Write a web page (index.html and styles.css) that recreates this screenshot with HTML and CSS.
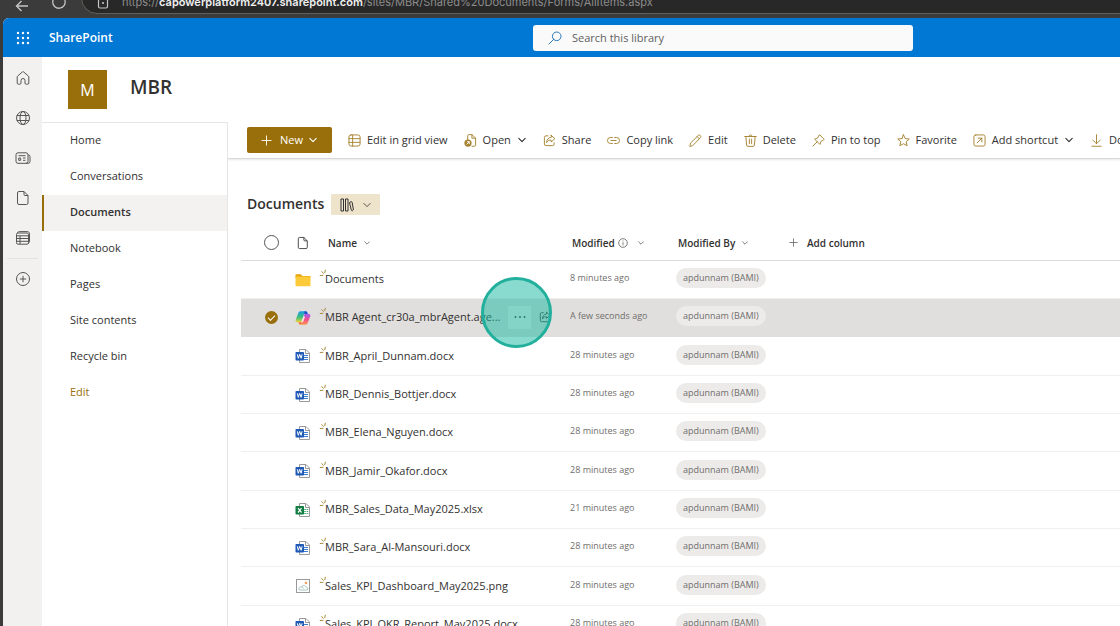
FILE: index.html
```html
<!DOCTYPE html>
<html lang="en">
<head>
<meta charset="utf-8">
<title>MBR - Documents</title>
<link rel="stylesheet" href="styles.css">
</head>
<body>
<svg class="defs" aria-hidden="true">
  <symbol id="chev" viewBox="0 0 10 10"><path d="M1 3l4 4 4-4" fill="none" stroke="currentColor" stroke-linecap="round" stroke-linejoin="round"/></symbol>
  <symbol id="plus" viewBox="0 0 12 12"><path d="M6 1v10M1 6h10" fill="none" stroke="currentColor" stroke-linecap="round"/></symbol>
  <symbol id="page" viewBox="0 0 14 16"><path d="M3 1.500h5l4 4v7.500a1.500 1.500 0 0 1-1.500 1.500h-7.500A1.500 1.500 0 0 1 1.500 13V3A1.500 1.500 0 0 1 3 1.500zM8 1.500V4.500a1 1 0 0 0 1 1h3" fill="none" stroke="currentColor"/></symbol>
  <symbol id="share" viewBox="0 0 14 14"><path d="M5.500 2H3.200A1.700 1.700 0 0 0 1.500 3.700v7.100a1.700 1.700 0 0 0 1.700 1.700h7.100a1.700 1.700 0 0 0 1.700-1.700V9.500M8.800 1.300 12.800 5 8.800 8.600V6.600C6.500 6.500 5 7.400 3.900 9.300 4.100 6 5.800 3.800 8.800 3.400z" fill="none" stroke="currentColor" stroke-linejoin="round"/></symbol>
  <symbol id="spark" viewBox="0 0 8 8"><path d="M6.400.8 5.700 4M2.500 2.300 4.600 4.600M.8 6.500l3.600-.2" fill="none" stroke="#a88c3c" stroke-width="1"/></symbol>
  <symbol id="word" viewBox="0 0 16 16"><path d="M4.500 1.500h6.500l3.500 3.500v9.500h-10z" fill="#fff" stroke="#9a9a9a"/><path d="M10.500 1.500V5.500h4" fill="none" stroke="#9a9a9a"/><path d="M9 7.500h4M9 9.500h4M9 11.500h4" stroke="#3f7fd0"/><rect x=".5" y="4" width="8.500" height="8.500" rx=".8" fill="#1d59b5"/><path d="m2.300 6.300 1 4 1.400-4 1.400 4 1-4" fill="none" stroke="#fff"/></symbol>
  <symbol id="excel" viewBox="0 0 16 16"><path d="M4.500 1.500h6.500l3.500 3.500v9.500h-10z" fill="#fff" stroke="#9a9a9a"/><path d="M10.500 1.500V5.500h4" fill="none" stroke="#9a9a9a"/><path d="M9.200 7.500h1.600m.8 0h1.600M9.200 9.500h1.600m.8 0h1.600M9.200 11.500h1.600m.8 0h1.600" stroke="#3aa76d"/><rect x=".5" y="4" width="8.500" height="8.500" rx=".8" fill="#107c41"/><path d="m3 6.200 3.500 4.300M6.500 6.200 3 10.500" fill="none" stroke="#fff" stroke-width="1.200"/></symbol>
</svg>
<header class="browser">
  <svg class="b-back" viewBox="0 0 14 12"><path d="M13 6H1.500M6.500 1l-5 5 5 5" fill="none" stroke="currentColor" stroke-width="1.400"/></svg>
  <svg class="b-reload" viewBox="0 0 14 14"><path d="M12.800 5A6.200 6.200 0 1 1 9 1.200" fill="none" stroke="currentColor" stroke-width="1.300"/></svg>
  <div class="address">
    <svg class="b-lock" viewBox="0 0 12 14"><path d="M1.500 3v8.500A1.500 1.500 0 0 0 3 13h6a1.500 1.500 0 0 0 1.500-1.500V3" fill="none" stroke="currentColor" stroke-width="1.200"/><circle cx="6" cy="8" r="1.100" fill="currentColor"/></svg>
    <span class="url">https://<b>capowerplatform2407.sharepoint.com</b>/sites/MBR/Shared%20Documents/Forms/AllItems.aspx</span>
  </div>
</header>
<div class="window">
  <header class="suite">
    <button class="waffle" aria-label="App launcher"><svg viewBox="0 0 14 14" fill="#fff"><circle cx="2" cy="2" r="1.200"/><circle cx="7" cy="2" r="1.200"/><circle cx="12" cy="2" r="1.200"/><circle cx="2" cy="7" r="1.200"/><circle cx="7" cy="7" r="1.200"/><circle cx="12" cy="7" r="1.200"/><circle cx="2" cy="12" r="1.200"/><circle cx="7" cy="12" r="1.200"/><circle cx="12" cy="12" r="1.200"/></svg></button>
    <a class="brand" href="#">SharePoint</a>
    <label class="search">
      <svg viewBox="0 0 14 14"><path d="M5.600 8.400 1 13" stroke="#2a76b8" stroke-linecap="round"/><circle cx="8.700" cy="5.300" r="4.300" fill="none" stroke="#2a76b8"/></svg>
      <input type="search" placeholder="Search this library" aria-label="Search this library">
    </label>
  </header>
  <div class="shell">
    <nav class="rail" aria-label="App bar">
      <a href="#" aria-label="Home"><svg viewBox="0 0 16 16"><path d="M7.200 2.100 2.700 6c-.4.300-.5.600-.5 1v6c0 .8.400 1.200 1.200 1.200h1.400c.8 0 1.200-.4 1.200-1.200V10.500a2 2 0 0 1 4 0V13c0 .8.400 1.200 1.200 1.200h1.400c.8 0 1.200-.4 1.200-1.200V7c0-.4-.1-.7-.5-1L8.800 2.100c-.5-.5-1.100-.5-1.600 0z"/></svg></a>
      <a href="#" aria-label="Sites"><svg viewBox="0 0 16 16"><circle cx="8" cy="8" r="6.500"/><ellipse cx="8" cy="8" rx="3" ry="6.500"/><path d="M1.900 5.500h12.200M1.900 10.500h12.200"/></svg></a>
      <a href="#" aria-label="News"><svg viewBox="0 0 16 16"><rect x="1" y="2.800" width="12" height="10.500" rx="2"/><path d="M13 5h.5A1.500 1.500 0 0 1 15 6.500v5a1.800 1.800 0 0 1-1.800 1.800H11M3.500 5.700h7M8 8h2.500M8 10.300h2.500M3.700 8h2v2.300h-2z"/></svg></a>
      <a href="#" aria-label="Files"><svg viewBox="0 0 14 16"><use href="#page"/></svg></a>
      <a href="#" aria-label="Lists"><svg viewBox="0 0 16 16"><rect x="1.500" y="3" width="12" height="11.200" rx="1.500"/><path d="M2.200 3.200C2.800 2 3.500 1.600 4.500 1.600h7.800c1.400 0 2.200.8 2.200 2.200v7.400c0 1-.3 1.600-1.300 2.200M1.500 5.800h12M1.500 8.500h12M1.500 11.300h12M5 5.800V14"/></svg></a>
      <hr>
      <a href="#" aria-label="Create"><svg viewBox="0 0 16 16"><circle cx="8" cy="8" r="6.500"/><path d="M8 4.800v6.400M4.800 8h6.400"/></svg></a>
    </nav>
    <div class="site">
      <header class="site-head"><span class="logo">M</span><h1>MBR</h1></header>
      <div class="columns">
        <nav class="side" aria-label="Site">
          <a href="#">Home</a><a href="#">Conversations</a><a href="#" class="on" aria-current="page">Documents</a><a href="#">Notebook</a><a href="#">Pages</a><a href="#">Site contents</a><a href="#">Recycle bin</a><a href="#" class="edit">Edit</a>
        </nav>
        <main class="main">
          <div class="bar">
            <button class="new"><svg class="p"><use href="#plus"/></svg>New<svg class="c"><use href="#chev"/></svg></button>
            <button><svg class="i" viewBox="0 0 14 14"><rect x="1" y="1" width="12" height="12" rx="2.200"/><path d="M5 1v12M1 5h12M1 9h12"/></svg>Edit in grid view</button>
            <button><svg class="i" viewBox="0 0 14 14"><path d="M4 6V1.800C4 1 4.500.7 5 .7h3.500l4 3.800v7.300c0 .9-.5 1.400-1.300 1.400H8.500M8.500.7v3.800h4"/><circle cx="4.300" cy="9.700" r="3.900" fill="currentColor" stroke="none"/><path d="m3 11 2.600-2.600M3.500 8.300h2.200v2.200" stroke="#fff"/></svg>Open<svg class="c"><use href="#chev"/></svg></button>
            <button><svg class="i"><use href="#share"/></svg>Share</button>
            <button><svg class="i" viewBox="0 0 14 14"><path d="M5.800 3.800H3.700a3.200 3.200 0 0 0 0 6.400h2.100M8.200 3.800h2.100a3.200 3.200 0 0 1 0 6.400H8.200M4.200 7h5.600"/></svg>Copy link</button>
            <button><svg class="i" viewBox="0 0 14 14"><path d="M1 13l.8-3.400L10 1.500c1.400-1.300 3.700.900 2.400 2.400L4.300 12.200zM8.800 2.700l2.400 2.500"/></svg>Edit</button>
            <button><svg class="i" viewBox="0 0 14 14"><path d="M.8 2.700h12.400M5.300 2.700a1.700 1.700 0 0 1 3.400 0M2 2.700l.8 9.200c.1.900.6 1.400 1.400 1.400h5.600c.8 0 1.300-.5 1.400-1.400l.8-9.200M5.800 5.500v5M8.200 5.500v5"/></svg>Delete</button>
            <button><svg class="i" viewBox="0 0 14 14"><path d="M8.700 1.300 12.700 5.300c.4.500.3 1-.3 1.300L9.600 8 8.500 11.200 2.800 5.500 6 4.400 7.400 1.600c.3-.6.9-.7 1.300-.3zM5.600 8.400 1 13"/></svg>Pin to top</button>
            <button><svg class="i" viewBox="0 0 14 14"><path d="m7 .9 1.800 4 4.400.5-3.300 2.900 1 4.300L7 10.500l-3.900 2.100 1-4.300L.8 5.400l4.400-.5z"/></svg>Favorite</button>
            <button><svg class="i" viewBox="0 0 14 14"><rect x="1" y="1" width="12" height="12" rx="2"/><path d="m4.500 9.500 5-5M5.500 4.500h4v4"/></svg>Add shortcut<svg class="c"><use href="#chev"/></svg></button>
            <button><svg class="i" viewBox="0 0 14 14"><path d="M7 .8v9.400M3 6.500l4 4 4-4M2 13.200h10"/></svg>Download</button>
          </div>
          <section class="library">
            <div class="title"><h2>Documents</h2>
              <button aria-label="View options"><svg class="books" viewBox="0 0 14 14"><path d="M1 1h2.500v12H1zM5.500 1H8v12H5.500zM9.500 4.500l1.500-.8c.5-.2 1 .1 1.100.6l1.200 6.700c.1.800-.1 1.400-.8 1.700-.6.200-1-.1-1.200-.7z"/></svg><svg class="c"><use href="#chev"/></svg></button>
            </div>
            <table>
              <colgroup><col class="c-check"><col class="c-icon"><col class="c-name"><col class="c-mod"><col class="c-by"><col></colgroup>
              <thead><tr>
                <th><input type="checkbox" aria-label="Select all"></th>
                <th><svg class="type-head"><use href="#page"/></svg></th>
                <th><span class="h">Name<svg><use href="#chev"/></svg></span></th>
                <th><span class="h">Modified<svg class="info" viewBox="0 0 10 10"><circle cx="5" cy="5" r="4.300" fill="none" stroke="currentColor" stroke-width=".8"/><path d="M5 4.300v3M5 2.500v.9" stroke="currentColor" stroke-width=".8"/></svg><svg><use href="#chev"/></svg></span></th>
                <th><span class="h">Modified By<svg><use href="#chev"/></svg></span></th>
                <th><button class="add"><svg><use href="#plus"/></svg>Add column</button></th>
              </tr></thead>
              <tbody>
                <tr><td></td><td><svg class="t" viewBox="0 0 16 16"><path d="M.5 3.200c0-.6.400-1 1-1H5.800L7.500 4H14.500c.6 0 1 .4 1 1v1H.5z" fill="#e9a40c"/><rect x=".5" y="4.600" width="15" height="9.600" rx="1" fill="#fdca3a"/></svg></td><td><div class="n"><svg class="s"><use href="#spark"/></svg><a href="#">Documents</a></div></td><td>8 minutes ago</td><td><span class="pill">apdunnam (BAMI)</span></td><td></td></tr>
                <tr class="sel"><td><input type="checkbox" checked aria-label="Select MBR Agent"></td><td><svg class="t" viewBox="0 0 16 16"><defs><linearGradient id="ga" x1="0" y1="0" x2="0" y2="1"><stop offset="0" stop-color="#1a9be8"/><stop offset=".55" stop-color="#3ec07a"/><stop offset="1" stop-color="#f4d03a"/></linearGradient><linearGradient id="gb" x1="0" y1="0" x2="0" y2="1"><stop offset="0" stop-color="#a45af0"/><stop offset=".5" stop-color="#f0508e"/><stop offset="1" stop-color="#ff9b4a"/></linearGradient></defs><path d="M10.500 1.200H5.500C4.300 1.200 3.600 2 3.200 3.200L.8 9.600c-.6 1.700.2 2.600 1.700 2.600h2.700c1 0 1.500-.6 1.800-1.500L9 4.200c.4-1.200 1-1.800 2-1.800z" fill="url(#ga)"/><path d="M9.500 1.200h1.200c1 0 1.500.6 1.800 1.600l.4 1.500H9z" fill="#2350c8"/><path d="M5.500 14.800h5c1.200 0 1.900-.8 2.300-2L15.200 6.600c.6-1.700-.2-2.500-1.700-2.500h-2.700c-1 0-1.500.6-1.800 1.500l-2 6.300c-.4 1.200-1 1.700-2 1.700z" fill="url(#gb)"/><path d="M3.300 12.200h3.300l-1 2.500c-1 0-1.500-.6-1.800-1.400z" fill="#f0703a"/><path d="M8.300 6.500h1.900L8.100 12H6.500z" fill="#fff" fill-opacity=".8"/></svg></td><td><div class="n"><svg class="s"><use href="#spark"/></svg><a href="#">MBR Agent_cr30a_mbrAgent.age...</a><span class="acts"><button class="more" aria-label="More actions"><svg viewBox="0 0 12 12" fill="currentColor"><circle cx="1.500" cy="6" r=".9"/><circle cx="6" cy="6" r=".9"/><circle cx="10.500" cy="6" r=".9"/></svg></button><button class="sh" aria-label="Share"><svg><use href="#share"/></svg></button><span class="spot"></span></span></div></td><td>A few seconds ago</td><td><span class="pill">apdunnam (BAMI)</span></td><td></td></tr>
                <tr><td></td><td><svg class="t"><use href="#word"/></svg></td><td><div class="n"><svg class="s"><use href="#spark"/></svg><a href="#">MBR_April_Dunnam.docx</a></div></td><td>28 minutes ago</td><td><span class="pill">apdunnam (BAMI)</span></td><td></td></tr>
                <tr><td></td><td><svg class="t"><use href="#word"/></svg></td><td><div class="n"><svg class="s"><use href="#spark"/></svg><a href="#">MBR_Dennis_Bottjer.docx</a></div></td><td>28 minutes ago</td><td><span class="pill">apdunnam (BAMI)</span></td><td></td></tr>
                <tr><td></td><td><svg class="t"><use href="#word"/></svg></td><td><div class="n"><svg class="s"><use href="#spark"/></svg><a href="#">MBR_Elena_Nguyen.docx</a></div></td><td>28 minutes ago</td><td><span class="pill">apdunnam (BAMI)</span></td><td></td></tr>
                <tr><td></td><td><svg class="t"><use href="#word"/></svg></td><td><div class="n"><svg class="s"><use href="#spark"/></svg><a href="#">MBR_Jamir_Okafor.docx</a></div></td><td>28 minutes ago</td><td><span class="pill">apdunnam (BAMI)</span></td><td></td></tr>
                <tr><td></td><td><svg class="t"><use href="#excel"/></svg></td><td><div class="n"><svg class="s"><use href="#spark"/></svg><a href="#">MBR_Sales_Data_May2025.xlsx</a></div></td><td>21 minutes ago</td><td><span class="pill">apdunnam (BAMI)</span></td><td></td></tr>
                <tr><td></td><td><svg class="t"><use href="#word"/></svg></td><td><div class="n"><svg class="s"><use href="#spark"/></svg><a href="#">MBR_Sara_Al-Mansouri.docx</a></div></td><td>28 minutes ago</td><td><span class="pill">apdunnam (BAMI)</span></td><td></td></tr>
                <tr><td></td><td><svg class="t" viewBox="0 0 16 16"><rect x="1.500" y="1.500" width="13" height="13" fill="#fff" stroke="#9a9a9a"/><circle cx="11" cy="5" r="1.300" fill="#f0a060"/><path d="M4.200 12h8c1.200-1.200.3-3-1.200-2.800C10.500 7 7.500 6.800 6.800 9 4.800 8.400 3 10.500 4.200 12zM6.800 9c.9.100 1.500.7 1.700 1.500" fill="none" stroke="#8fb8ae" stroke-width=".8"/></svg></td><td><div class="n"><svg class="s"><use href="#spark"/></svg><a href="#">Sales_KPI_Dashboard_May2025.png</a></div></td><td>28 minutes ago</td><td><span class="pill">apdunnam (BAMI)</span></td><td></td></tr>
                <tr><td></td><td><svg class="t"><use href="#word"/></svg></td><td><div class="n"><svg class="s"><use href="#spark"/></svg><a href="#">Sales_KPI_OKR_Report_May2025.docx</a></div></td><td>28 minutes ago</td><td><span class="pill">apdunnam (BAMI)</span></td><td></td></tr>
              </tbody>
            </table>
          </section>
        </main>
      </div>
    </div>
  </div>
</div>
</body>
</html>
```
FILE: styles.css
```css
* { box-sizing: border-box; }
html, body { height: 100%; }
body { margin: 0; display: flex; flex-direction: column; overflow: hidden; background: #3b3b3b; color: #323130; font: 11px/16px "Open Sans", "Noto Sans", sans-serif; }
a { color: inherit; text-decoration: none; }
button { font: inherit; color: inherit; border: 0; background: none; padding: 0; white-space: nowrap; }
svg { flex: none; display: block; }
h1, h2 { margin: 0; font-weight: 600; }
.defs { position: absolute; width: 0; height: 0; }

.browser { flex: none; display: flex; align-items: flex-end; height: 18px; padding: 0 0 4px 15px; overflow: hidden; color: #c4c4c4; }
.b-back { width: 14px; height: 12px; margin-bottom: 2px; }
.b-reload { width: 14px; height: 14px; margin: 0 0 5px 23px; }
.address { flex: 1; display: flex; align-items: center; height: 32px; margin: 0 -20px 0 15px; padding: 8px 0 0 15px; background: #282828; border: 1px solid #62605b; border-radius: 16px; }
.b-lock { width: 12px; height: 14px; margin-right: 13px; }
.url { font: 11px/16px Inter, "Liberation Sans", sans-serif; color: #8c8c8c; white-space: nowrap; }
.url b { font-weight: 600; color: #f0f0f0; }

.window { flex: 1; min-height: 0; display: flex; flex-direction: column; margin-left: 3px; border-top-left-radius: 6px; overflow: hidden; background: #fff; }
.suite { flex: none; display: flex; align-items: center; height: 39px; background: #0078d4; color: #fff; }
.waffle { display: grid; place-items: center; width: 39px; height: 39px; }
.waffle svg { width: 14px; height: 14px; }
.brand { width: 491px; padding-left: 7px; font-size: 12px; font-weight: 600; }
.search { flex: none; display: flex; align-items: center; gap: 10px; width: 34%; height: 26px; padding: 0 15px; border-radius: 3px; background: #fafafa; }
.search svg { width: 14px; height: 14px; }
.search input { flex: 1; min-width: 0; border: 0; padding: 0; outline: 0; background: none; font: inherit; color: #323130; }
.search input::placeholder { color: #616161; opacity: 1; }

.shell { flex: 1; min-height: 0; display: flex; }
.rail { flex: none; width: 39px; background: #f2f1f0; padding-top: 1px; }
.rail a { display: grid; place-items: center; height: 40px; color: #555; }
.rail svg { width: 16px; height: 16px; fill: none; stroke: currentColor; }
.rail hr { margin: 0 4px; border: 0; border-top: 1px solid #e4e2e0; }
.site { flex: 1; min-width: 0; display: flex; flex-direction: column; }
.site-head { flex: none; display: flex; align-items: center; gap: 23px; height: 65px; padding-left: 26px; }
.logo { display: grid; place-items: center; width: 39px; height: 39px; background: #986f0b; color: #fff; font-size: 16px; }
.site-head h1 { font-size: 19px; line-height: 24px; padding-bottom: 5px; }
.columns { flex: 1; min-height: 0; display: flex; }
.side { flex: none; width: 186px; border: 1px solid #e6e5e4; border-width: 1px 1px 0 0; }
.side a { display: flex; align-items: center; height: 36px; padding: 0 0 2px 28px; }
.side .on { padding-left: 26px; border-left: 2px solid #986f0b; background: #f3f2f1; font-weight: 600; }
.side .edit { color: #986f0b; }

.main { flex: 1; min-width: 0; overflow: hidden; }
.bar { display: flex; align-items: center; gap: 16px; height: 37px; padding-left: 19px; border-bottom: 1px solid #d8d8d8; box-shadow: 0 1px 2px #00000018; }
.bar button { flex: none; display: flex; align-items: center; gap: 6px; }
.bar .i { width: 13px; height: 13px; color: #a5822f; fill: none; stroke: currentColor; stroke-linejoin: round; stroke-linecap: round; }
.bar .c, .title .c { width: 10px; height: 10px; padding: 1px; }
.bar .c { stroke-width: 1.4; }
.bar .new { width: 85px; height: 26px; justify-content: center; gap: 8px; border-radius: 2px; background: #986f0b; color: #fff; }
.new .p { width: 11px; height: 11px; }
.bar .new .c { margin-left: -3px; }

.library { padding-left: 13px; }
.title { display: flex; align-items: center; gap: 7px; height: 21px; margin: 35px 0 0 6px; }
.title h2 { font-size: 14px; line-height: 20px; padding-bottom: 1px; }
.title button { display: flex; align-items: center; justify-content: center; gap: 8px; width: 49px; height: 21px; background: #eee4cb; border-radius: 1px; }
.books { width: 14px; height: 14px; fill: none; stroke: #323130; }

table { width: 100%; table-layout: fixed; border-collapse: separate; border-spacing: 0; margin-top: 10px; }
.c-check { width: 46px; } .c-icon { width: 32px; } .c-name { width: 251px; } .c-mod { width: 106px; } .c-by { width: 113px; }
th, td { padding: 0; text-align: left; white-space: nowrap; }
th:first-child, td:first-child { padding-left: 15px; }
th { height: 36px; border-bottom: 1px solid #dcdcdc; font-size: 10px; font-weight: 600; }
.h { display: flex; align-items: center; gap: 6px; padding-left: 9px; }
th:nth-child(4) .h, th:nth-child(5) .h { padding-left: 2px; }
.h svg { width: 8px; height: 8px; padding: 1px; }
.h .info { width: 10px; height: 10px; margin: 0 3px 0 -3px; padding: 0; color: #605e5c; }
.add { display: flex; align-items: center; gap: 9px; font-weight: 600; }
.add svg { width: 9px; height: 9px; color: #605e5c; }
input[type=checkbox] { appearance: none; display: grid; place-items: center; width: 15px; height: 15px; margin: 0 auto; border: 1px solid #555; border-radius: 50%; background: #fff; }
input[type=checkbox]:checked { width: 13px; height: 13px; border: 0; background: #986f0b; }
input[type=checkbox]:checked::after { content: ""; width: 6px; height: 3px; margin-top: -2px; border: solid #fff; border-width: 0 0 1px 1px; rotate: -45deg; }
.type-head { width: 12px; height: 14px; margin: 0 auto; }
td { height: 38px; border-bottom: 1px solid #f0efee; }
tr:nth-child(3n) td { height: 39px; }
.sel td { background: #e1dfdd; border-color: #e1dfdd; }
.t { width: 16px; height: 16px; margin: 0 auto; }
td:nth-child(3) { padding-bottom: 1px; }
td:nth-child(4), td:nth-child(5) { padding-bottom: 3px; font-size: 9px; color: #706e6c; }
.n { display: flex; align-items: center; }
.s { width: 8px; height: 8px; margin: 0 -2px 12px 0; }
.acts { position: relative; display: flex; align-items: center; gap: 8px; margin-left: auto; padding-right: 19px; }
.more { display: grid; place-items: center; width: 23px; height: 23px; background: #f3f2f1; }
.more svg { width: 12px; height: 12px; }
.sh svg { width: 12px; height: 12px; }
.spot { position: absolute; left: -27px; top: -29px; width: 71px; height: 71px; border: 3px solid #22b09d; border-radius: 50%; background: #16b8a080; pointer-events: none; }
.pill { display: inline-block; height: 20px; padding: 2px 7px; border-radius: 10px; background: #edebe9; line-height: 16px; color: #706e6c; }
```
